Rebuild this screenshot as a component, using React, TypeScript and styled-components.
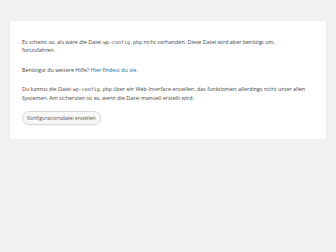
import React from "react";
import styled, { createGlobalStyle } from "styled-components";

const Global = createGlobalStyle`
  html, body { margin: 0; padding: 0; background: #f1f1f1; }
  body { font-family: "Open Sans", Roboto, "Liberation Sans", sans-serif; color: #444; }
`;

const Card = styled.div`
  margin: 21px 10px 0;
  background: #fff;
  box-shadow: 0 1px 2px rgba(0, 0, 0, 0.08);
  padding: 6px 19px 14px 12px;
  box-sizing: border-box;
  min-height: 118px;
`;

const Para = styled.p`
  margin: 10.5px 0 0;
  font-size: 5.4px;
  line-height: 8.8px;
`;

const Code = styled.code`
  font-family: "DejaVu Sans Mono", "Liberation Mono", monospace;
  font-size: 5px;
  line-height: 1;
`;

const Link = styled.a`
  color: #0074a2;
  text-decoration: none;
`;

const Step = styled.p`
  margin: 9px 0 0;
  display: flex;
`;

const Button = styled.a`
  display: inline-flex;
  align-items: center;
  height: 14px;
  padding: 0 4px;
  box-sizing: border-box;
  border: 1px solid #d8d8d8;
  border-radius: 7px;
  background: #f7f7f7;
  color: #555;
  font-size: 5.1px;
  text-decoration: none;
  box-shadow: 0 1px 0 rgba(0, 0, 0, 0.03);
`;

export default function App() {
  return (
    <>
      <Global />
      <Card>
        <Para>
          Es scheint so, als wäre die Datei <Code>wp-config.php</Code> nicht vorhanden. Diese Datei wird aber benötigt um,
          fortzufahren.
        </Para>
        <Para>
          Benötigst du weitere Hilfe? <Link href="#">Hier findest du sie.</Link>
        </Para>
        <Para>
          Du kannst die Datei <Code>wp-config.php</Code> über ein Web-Interface erstellen, das funktioniert allerdings nicht unter allen
          Systemen. Am sichersten ist es, wenn die Datei manuell erstellt wird.
        </Para>
        <Step>
          <Button href="#">Konfigurationsdatei erstellen</Button>
        </Step>
      </Card>
    </>
  );
}
